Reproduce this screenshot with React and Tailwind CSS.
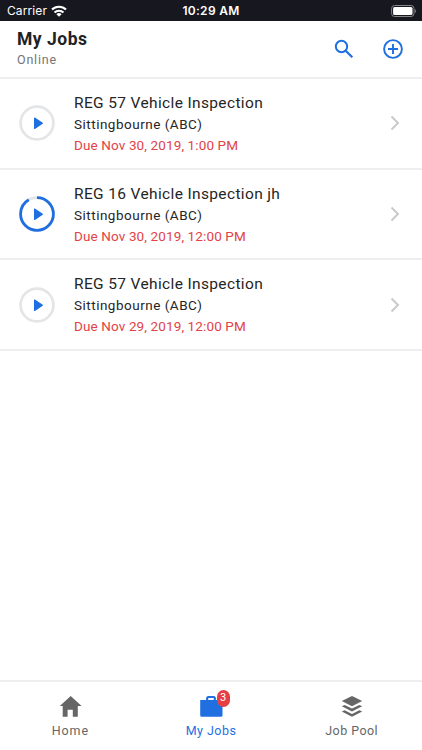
import React from "react";

const BLUE = "#1f6fe0";

const jobs = [
  { title: "REG 57 Vehicle Inspection", due: "Due Nov 30, 2019, 1:00 PM", progress: 0 },
  { title: "REG 16 Vehicle Inspection jh", due: "Due Nov 30, 2019, 12:00 PM", progress: 0.91 },
  { title: "REG 57 Vehicle Inspection", due: "Due Nov 29, 2019, 12:00 PM", progress: 0 },
];

function StatusBar() {
  return (
    <div className="relative flex h-[21px] shrink-0 items-center justify-between bg-[#17171f] pl-[7px] pr-[5px] text-white">
      <div className="flex items-center gap-[4px]">
        <span className="font-[Inter] text-[12px] leading-[21px] tracking-[0.1px]">Carrier</span>
        <svg width="16" height="12" viewBox="0 0 16 12" fill="none" stroke="white" strokeWidth="2.1">
          <path d="M1 4.6a10 10 0 0 1 14 0" />
          <path d="M3.5 7.6a6.4 6.4 0 0 1 9 0" />
          <path d="M8 11.8 5.4 9.2a3.7 3.7 0 0 1 5.2 0z" fill="white" stroke="none" />
        </svg>
      </div>
      <span className="absolute inset-x-0 text-center font-[Inter] text-[12px] font-semibold leading-[22px] tracking-[0.3px]">10:29 AM</span>
      <svg width="26" height="12" viewBox="0 0 26 12">
        <rect x="0.6" y="0.5" width="22.4" height="11" rx="3" fill="none" stroke="#85858b" />
        <rect x="2.1" y="2" width="19.4" height="8" rx="1.6" fill="white" />
        <path d="M24 4.2v3.6c1.3-.5 1.3-3.1 0-3.6z" fill="#85858b" />
      </svg>
    </div>
  );
}

function PlayRing({ progress }) {
  const length = 2 * Math.PI * 16.4;
  return (
    <svg width="36" height="36" viewBox="0 0 36 36" className="shrink-0">
      <circle cx="18" cy="18" r="16.4" fill="none" stroke="#e4e5e7" strokeWidth="2.7" />
      {progress > 0 && (
        <circle cx="18" cy="18" r="16.4" fill="none" stroke={BLUE} strokeWidth="2.8" strokeDasharray={`${length * progress} ${length}`} transform="rotate(-90 18 18)" />
      )}
      <path d="M15.6 13.1v10.4l7.8-5.2z" fill={BLUE} stroke={BLUE} strokeWidth="1.2" strokeLinejoin="round" />
    </svg>
  );
}

function JobRow({ job }) {
  return (
    <div className="flex h-[90.7px] items-center border-b-2 border-[#eeeeee] pl-[19px] pr-[21px]">
      <PlayRing progress={job.progress} />
      <div className="ml-[19px] flex flex-1 flex-col whitespace-nowrap">
        <span className="text-[15.5px] leading-[22px] tracking-[0.36px] text-[#252525]">{job.title}</span>
        <span className="text-[13.5px] leading-[21px] tracking-[0.5px] text-[#252525]">Sittingbourne (ABC)</span>
        <span className="text-[13.5px] leading-[20px] tracking-[0.12px] text-[#e04348]">{job.due}</span>
      </div>
      <svg width="12" height="16" viewBox="0 0 12 16" fill="none" stroke="#c9c9cb" strokeWidth="1.9">
        <path d="M2.5 1.5 9 8l-6.5 6.5" />
      </svg>
    </div>
  );
}

function HomeIcon() {
  return (
    <svg width="24" height="24" viewBox="0 0 24 24" fill="#666">
      <path d="M12.7 2 1.8 12h2.9v10.7h4.9v-6.9h5.2v6.9h5V12h3.8z" />
    </svg>
  );
}

function BriefcaseIcon() {
  return (
    <svg width="24" height="24" viewBox="0 0 24 24" fill={BLUE}>
      <path fillRule="evenodd" d="M1.2 6h5.9V3.6L8.7 2h6.6l1.6 1.6V6h6.6v15.2q0 1.5-1.5 1.5H2.7q-1.5 0-1.5-1.5zM9.2 4.1V6h5.6V4.1z" />
    </svg>
  );
}

function LayersIcon() {
  return (
    <svg width="24" height="24" viewBox="0 0 24 24" fill="#666">
      <path d="M12 2 22.2 7 12 12.2 1.8 7z" />
      <path d="m1.800 12.300 2.800-1.400 7.400 3.700 7.400-3.700 2.800 1.400L12 17.500z" />
      <path d="m1.800 17.600 2.800-1.400 7.400 3.700 7.400-3.700 2.800 1.400L12 22.800z" />
    </svg>
  );
}

function Tab({ icon, label, color, tracking, badge }) {
  return (
    <div className={`flex flex-1 flex-col items-center pt-[12px] ${color}`}>
      <div className="relative">
        {icon}
        {badge && (
          <span className="absolute left-[17.5px] top-[-4px] flex h-[17px] w-[13px] items-center justify-center rounded-full bg-[#e63f43] text-[11px] text-white">{badge}</span>
        )}
      </div>
      <span className={`mt-[3.5px] whitespace-nowrap text-[12.5px] leading-[18px] ${tracking}`}>{label}</span>
    </div>
  );
}

export default function App() {
  return (
    <div className="flex h-screen w-full flex-col overflow-hidden bg-white font-[Roboto,sans-serif]">
      <StatusBar />
      <header className="flex h-[58px] shrink-0 items-start justify-between border-b-2 border-[#eeeeee] pl-[17px] pr-[17px]">
        <div className="flex flex-col pt-[7px]">
          <h1 className="text-[17.5px] font-bold leading-[23px] tracking-[0.5px] text-[#222]">My Jobs</h1>
          <span className="text-[12.5px] leading-[18px] tracking-[0.8px] text-[#757575]">Online</span>
        </div>
        <div className="flex gap-[25px] pt-[16px]">
          <svg width="24" height="24" viewBox="0 0 24 24" fill="none" stroke={BLUE} strokeWidth="2">
            <circle cx="9.5" cy="9.5" r="5.7" />
            <path d="m13.7 13.7 6.6 6.6" strokeWidth="2.2" />
          </svg>
          <svg width="24" height="24" viewBox="0 0 24 24" fill="none" stroke={BLUE} strokeWidth="1.9">
            <circle cx="12" cy="12" r="8.9" />
            <path d="M12 7v10M7 12h10" />
          </svg>
        </div>
      </header>
      <main className="flex-1">
        {jobs.map((job, i) => <JobRow key={i} job={job} />)}
      </main>
      <nav className="flex h-[70px] shrink-0 border-t-2 border-[#eeeeee]">
        <Tab icon={<HomeIcon />} label="Home" color="text-[#666]" tracking="tracking-[0.9px]" />
        <Tab icon={<BriefcaseIcon />} label="My Jobs" color="text-[#1f6fe0]" tracking="tracking-[0.45px]" badge="3" />
        <Tab icon={<LayersIcon />} label="Job Pool" color="text-[#666]" tracking="tracking-[0.45px]" />
      </nav>
    </div>
  );
}
